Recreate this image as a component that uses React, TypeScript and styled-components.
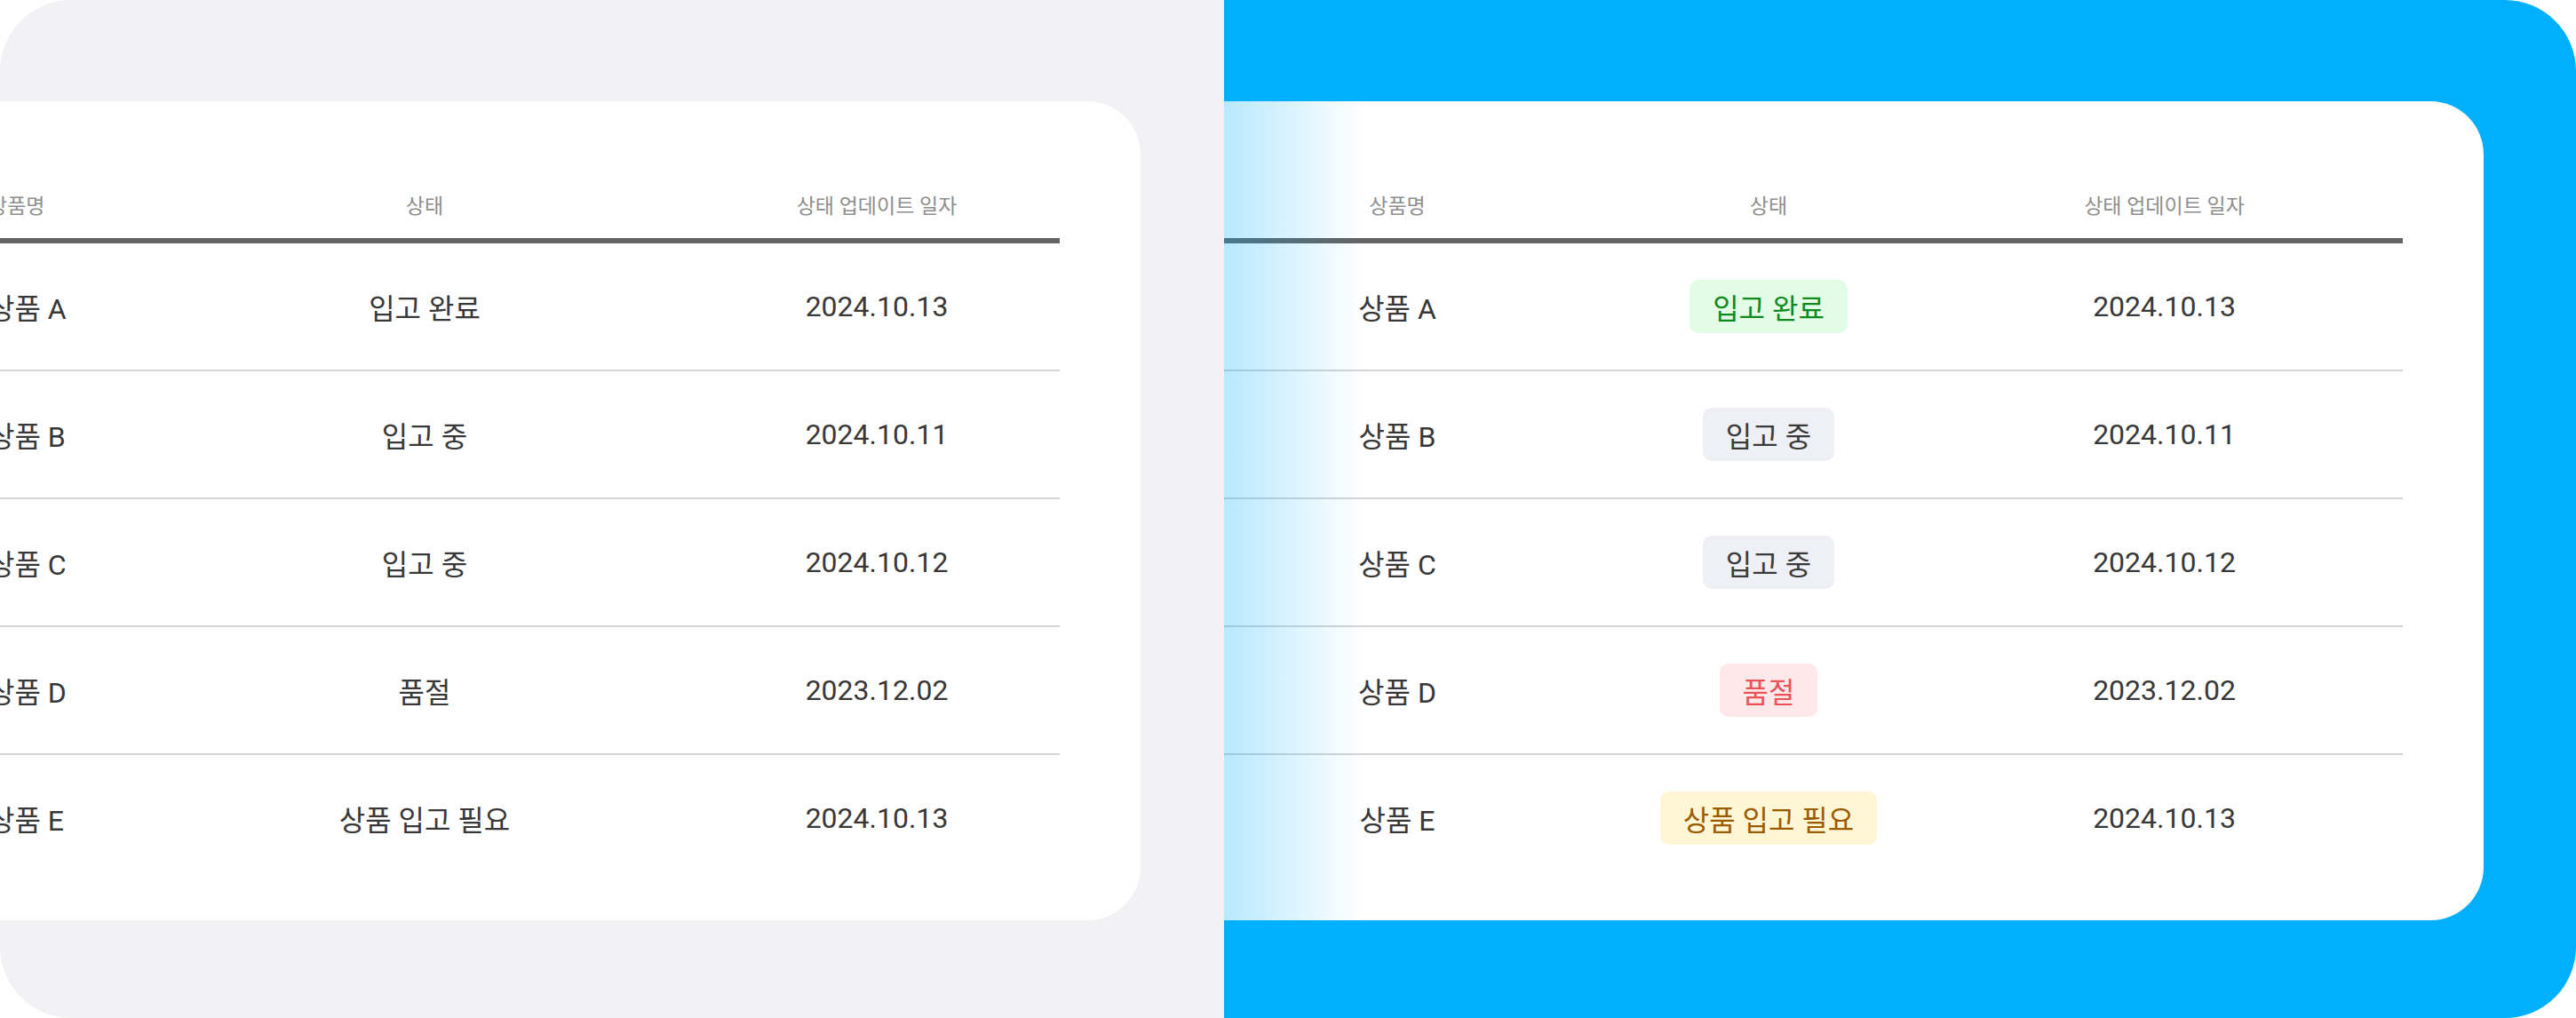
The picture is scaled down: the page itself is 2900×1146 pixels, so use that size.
import styled, { createGlobalStyle } from "styled-components";

type Tone = "done" | "progress" | "soldout" | "needed";

interface Item {
  name: string;
  status: string;
  tone: Tone;
  date: string;
}

const items: Item[] = [
  { name: "상품 A", status: "입고 완료", tone: "done", date: "2024.10.13" },
  { name: "상품 B", status: "입고 중", tone: "progress", date: "2024.10.11" },
  { name: "상품 C", status: "입고 중", tone: "progress", date: "2024.10.12" },
  { name: "상품 D", status: "품절", tone: "soldout", date: "2023.12.02" },
  { name: "상품 E", status: "상품 입고 필요", tone: "needed", date: "2024.10.13" },
];

const tones: Record<Tone, { bg: string; fg: string }> = {
  done: { bg: "#e2fce5", fg: "#0f8a1f" },
  progress: { bg: "#eff0f5", fg: "#3a3a3a" },
  soldout: { bg: "#ffe8ea", fg: "#ea5258" },
  needed: { bg: "#fff6d5", fg: "#9b5b00" },
};

interface TableProps {
  cols: string;
  offset: number;
  firstAlign: "left" | "center";
  badges?: boolean;
}

const StockTable = ({ cols, offset, firstAlign, badges }: TableProps) => {
  return (
    <Card $offset={offset}>
      <HeadRow $cols={cols}>
        <HeadCell $align={firstAlign}>상품명</HeadCell>
        <HeadCell $align="center">상태</HeadCell>
        <HeadCell $align="center">상태 업데이트 일자</HeadCell>
      </HeadRow>
      {items.map((item) => (
        <BodyRow key={item.name} $cols={cols}>
          <Cell $align={firstAlign}>{item.name}</Cell>
          <Cell $align="center">
            {badges ? (
              <Badge $tone={item.tone}>{item.status}</Badge>
            ) : (
              item.status
            )}
          </Cell>
          <Cell $align="center">{item.date}</Cell>
        </BodyRow>
      ))}
    </Card>
  );
};

const App = () => {
  return (
    <>
      <GlobalStyle />
      <Frame>
        <Panel $bg="#f2f2f4" $width={1378}>
          <StockTable cols="188px 606px 412px" offset={104} firstAlign="left" />
        </Panel>
        <Panel $bg="#00b0ff" $width={1522}>
          <StockTable
            cols="482px 354px 537px"
            offset={137}
            firstAlign="center"
            badges
          />
          <ScrollShade />
        </Panel>
      </Frame>
    </>
  );
};

export default App;

const GlobalStyle = createGlobalStyle`
  html, body {
    margin: 0;
    padding: 0;
    background: #ffffff;
  }
  body {
    font-family: Roboto, "Noto Sans CJK KR", sans-serif;
  }
`;

const Frame = styled.div`
  width: 2900px;
  height: 1146px;
  display: flex;
  border-radius: 80px;
  overflow: hidden;
`;

const Panel = styled.section<{ $bg: string; $width: number }>`
  position: relative;
  flex: 0 0 ${(p) => p.$width}px;
  display: flex;
  align-items: flex-start;
  padding-top: 114px;
  box-sizing: border-box;
  background: ${(p) => p.$bg};
  overflow: hidden;
`;

const Card = styled.div<{ $offset: number }>`
  flex: 0 0 auto;
  margin-left: -${(p) => p.$offset}px;
  padding: 78px 91px 44px;
  background: #ffffff;
  border-radius: 60px;
`;

const HeadRow = styled.div<{ $cols: string }>`
  display: grid;
  grid-template-columns: ${(p) => p.$cols};
  height: 82px;
  box-sizing: border-box;
  border-bottom: 6px solid #646464;
`;

const BodyRow = styled.div<{ $cols: string }>`
  display: grid;
  grid-template-columns: ${(p) => p.$cols};
  height: 144px;
  box-sizing: border-box;
  border-bottom: 2px solid #d4d4d4;

  &:last-child {
    height: 142px;
    border-bottom: none;
  }
`;

const HeadCell = styled.div<{ $align: "left" | "center" }>`
  display: flex;
  align-items: center;
  justify-content: ${(p) => (p.$align === "left" ? "flex-start" : "center")};
  font-size: 23px;
  color: #8e8e8e;
  white-space: nowrap;
`;

const Cell = styled.div<{ $align: "left" | "center" }>`
  display: flex;
  align-items: center;
  justify-content: ${(p) => (p.$align === "left" ? "flex-start" : "center")};
  font-size: 32px;
  color: #383838;
  white-space: nowrap;
`;

const Badge = styled.span<{ $tone: Tone }>`
  display: inline-flex;
  align-items: center;
  height: 60px;
  padding: 0 26px;
  border-radius: 10px;
  background: ${(p) => tones[p.$tone].bg};
  color: ${(p) => tones[p.$tone].fg};
`;

const ScrollShade = styled.div`
  position: absolute;
  left: 0;
  top: 114px;
  width: 156px;
  height: 922px;
  background: linear-gradient(
    to right,
    rgba(0, 176, 255, 0.28),
    rgba(0, 176, 255, 0)
  );
  pointer-events: none;
`;
